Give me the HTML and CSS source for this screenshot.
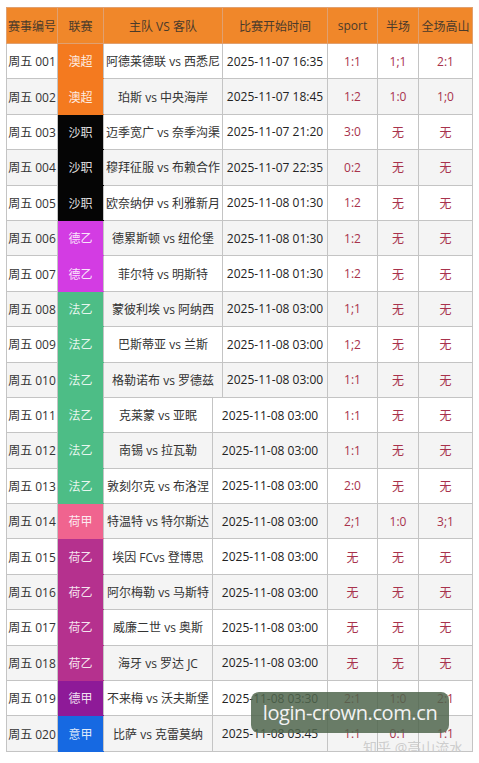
FILE: index.html
```html
<!DOCTYPE html>
<html lang="zh-CN">

<head>
    <meta charset="UTF-8">
    <meta name="viewport" content="width=device-width, initial-scale=1.0">
    <title>赛事列表</title>
    <link rel="stylesheet" href="styles.css">
</head>

<body>
    <div class="sheet">
        <table class="grid top">
            <colgroup>
                <col class="c-no">
                <col class="c-lg">
                <col class="c-team">
                <col class="c-time">
                <col class="c-sc">
                <col class="c-half">
                <col class="c-full">
            </colgroup>
            <thead>
                <tr>
                    <th>赛事编号</th>
                    <th>联赛</th>
                    <th>主队 VS 客队</th>
                    <th>比赛开始时间</th>
                    <th>sport</th>
                    <th>半场</th>
                    <th>全场高山</th>
                </tr>
            </thead>
            <tbody>
                <tr>
                    <td>周五 001</td>
                    <td class="lg aus">澳超</td>
                    <td>阿德莱德联 vs 西悉尼</td>
                    <td class="time">2025-11-07 16:35</td>
                    <td class="sc">1:1</td>
                    <td class="sc">1;1</td>
                    <td class="sc">2:1</td>
                </tr>
                <tr>
                    <td>周五 002</td>
                    <td class="lg aus">澳超</td>
                    <td>珀斯 vs 中央海岸</td>
                    <td class="time">2025-11-07 18:45</td>
                    <td class="sc">1:2</td>
                    <td class="sc">1:0</td>
                    <td class="sc">1;0</td>
                </tr>
                <tr>
                    <td>周五 003</td>
                    <td class="lg sau">沙职</td>
                    <td>迈季宽广 vs 奈季沟渠</td>
                    <td class="time">2025-11-07 21:20</td>
                    <td class="sc">3:0</td>
                    <td class="sc">无</td>
                    <td class="sc">无</td>
                </tr>
                <tr>
                    <td>周五 004</td>
                    <td class="lg sau">沙职</td>
                    <td>穆拜征服 vs 布赖合作</td>
                    <td class="time">2025-11-07 22:35</td>
                    <td class="sc">0:2</td>
                    <td class="sc">无</td>
                    <td class="sc">无</td>
                </tr>
                <tr>
                    <td>周五 005</td>
                    <td class="lg sau">沙职</td>
                    <td>欧奈纳伊 vs 利雅新月</td>
                    <td class="time">2025-11-08 01:30</td>
                    <td class="sc">1:2</td>
                    <td class="sc">无</td>
                    <td class="sc">无</td>
                </tr>
                <tr>
                    <td>周五 006</td>
                    <td class="lg ger2">德乙</td>
                    <td>德累斯顿 vs 纽伦堡</td>
                    <td class="time">2025-11-08 01:30</td>
                    <td class="sc">1:2</td>
                    <td class="sc">无</td>
                    <td class="sc">无</td>
                </tr>
                <tr>
                    <td>周五 007</td>
                    <td class="lg ger2">德乙</td>
                    <td>菲尔特 vs 明斯特</td>
                    <td class="time">2025-11-08 01:30</td>
                    <td class="sc">1:2</td>
                    <td class="sc">无</td>
                    <td class="sc">无</td>
                </tr>
                <tr>
                    <td>周五 008</td>
                    <td class="lg fra2">法乙</td>
                    <td>蒙彼利埃 vs 阿纳西</td>
                    <td class="time">2025-11-08 03:00</td>
                    <td class="sc">1;1</td>
                    <td class="sc">无</td>
                    <td class="sc">无</td>
                </tr>
                <tr>
                    <td>周五 009</td>
                    <td class="lg fra2">法乙</td>
                    <td>巴斯蒂亚 vs 兰斯</td>
                    <td class="time">2025-11-08 03:00</td>
                    <td class="sc">1;2</td>
                    <td class="sc">无</td>
                    <td class="sc">无</td>
                </tr>
                <tr>
                    <td>周五 010</td>
                    <td class="lg fra2">法乙</td>
                    <td>格勒诺布 vs 罗德兹</td>
                    <td class="time">2025-11-08 03:00</td>
                    <td class="sc">1:1</td>
                    <td class="sc">无</td>
                    <td class="sc">无</td>
                </tr>
            </tbody>
        </table>

        <table class="grid bottom">
            <colgroup>
                <col class="c-no">
                <col class="c-lg">
                <col class="c-team2">
                <col class="c-time2">
                <col class="c-sc">
                <col class="c-half">
                <col class="c-full">
            </colgroup>
            <tbody>
                <tr>
                    <td>周五 011</td>
                    <td class="lg fra2">法乙</td>
                    <td>克莱蒙 vs 亚眠</td>
                    <td class="time">2025-11-08 03:00</td>
                    <td class="sc">1:1</td>
                    <td class="sc">无</td>
                    <td class="sc">无</td>
                </tr>
                <tr>
                    <td>周五 012</td>
                    <td class="lg fra2">法乙</td>
                    <td>南锡 vs 拉瓦勒</td>
                    <td class="time">2025-11-08 03:00</td>
                    <td class="sc">1:1</td>
                    <td class="sc">无</td>
                    <td class="sc">无</td>
                </tr>
                <tr>
                    <td>周五 013</td>
                    <td class="lg fra2">法乙</td>
                    <td>敦刻尔克 vs 布洛涅</td>
                    <td class="time">2025-11-08 03:00</td>
                    <td class="sc">2:0</td>
                    <td class="sc">无</td>
                    <td class="sc">无</td>
                </tr>
                <tr>
                    <td>周五 014</td>
                    <td class="lg ned1">荷甲</td>
                    <td>特温特 vs 特尔斯达</td>
                    <td class="time">2025-11-08 03:00</td>
                    <td class="sc">2;1</td>
                    <td class="sc">1:0</td>
                    <td class="sc">3;1</td>
                </tr>
                <tr>
                    <td>周五 015</td>
                    <td class="lg ned2">荷乙</td>
                    <td>埃因 FCvs 登博思</td>
                    <td class="time">2025-11-08 03:00</td>
                    <td class="sc">无</td>
                    <td class="sc">无</td>
                    <td class="sc">无</td>
                </tr>
                <tr>
                    <td>周五 016</td>
                    <td class="lg ned2">荷乙</td>
                    <td>阿尔梅勒 vs 马斯特</td>
                    <td class="time">2025-11-08 03:00</td>
                    <td class="sc">无</td>
                    <td class="sc">无</td>
                    <td class="sc">无</td>
                </tr>
                <tr>
                    <td>周五 017</td>
                    <td class="lg ned2">荷乙</td>
                    <td>威廉二世 vs 奥斯</td>
                    <td class="time">2025-11-08 03:00</td>
                    <td class="sc">无</td>
                    <td class="sc">无</td>
                    <td class="sc">无</td>
                </tr>
                <tr>
                    <td>周五 018</td>
                    <td class="lg ned2">荷乙</td>
                    <td>海牙 vs 罗达 JC</td>
                    <td class="time">2025-11-08 03:00</td>
                    <td class="sc">无</td>
                    <td class="sc">无</td>
                    <td class="sc">无</td>
                </tr>
                <tr>
                    <td>周五 019</td>
                    <td class="lg ger1">德甲</td>
                    <td>不来梅 vs 沃夫斯堡</td>
                    <td class="time">2025-11-08 03:30</td>
                    <td class="sc">2:1</td>
                    <td class="sc">1:0</td>
                    <td class="sc">2:1</td>
                </tr>
                <tr>
                    <td>周五 020</td>
                    <td class="lg ita1">意甲</td>
                    <td>比萨 vs 克雷莫纳</td>
                    <td class="time">2025-11-08 03:45</td>
                    <td class="sc">1:1</td>
                    <td class="sc">0:1</td>
                    <td class="sc">1:1</td>
                </tr>
            </tbody>
        </table>

        <div class="stamp">login-crown.com.cn</div>
        <div class="credit">知乎 @高山流水</div>
    </div>
</body>

</html>
```

FILE: styles.css
```css
html, body {
    margin: 0;
    padding: 0;
    background: #fff;
}

body {
    font-family: "Open Sans", "Noto Sans CJK SC", sans-serif;
    color: #333;
}

.sheet {
    position: relative;
    width: 466px;
    padding: 7px 0 0 6px;
}

.grid {
    width: 466px;
    table-layout: fixed;
    border-collapse: collapse;
    font-size: 12px;
}

.bottom {
    margin-top: -1px;
}

th,
td {
    border: 1px solid #c4c4c4;
    padding: 0;
    text-align: center;
    white-space: nowrap;
    overflow: hidden;
}

th {
    height: 35px;
    background-color: #f0872a;
    color: #4a3a2a;
    font-weight: normal;
    font-size: 12px;
    border-color: #e0a070;
}

td {
    height: 34.4px;
}

tbody tr:nth-child(even) td {
    background-color: #f4f4f4;
}

.c-no { width: 51px; }
.c-lg { width: 46px; }
.c-team { width: 119px; }
.c-time { width: 105px; }
.c-team2 { width: 109px; }
.c-time2 { width: 115px; }
.c-sc { width: 50px; }
.c-half { width: 41px; }
.c-full { width: 54px; }

.time {
    color: #222;
}

.sc {
    color: #a8324c;
}

/* league colour blocks */
.grid tbody tr td.lg {
    color: rgba(255, 255, 255, 0.88);
}

.grid tbody tr td.aus { background-color: #f47a1f; border-top-color: #f47a1f; border-bottom-color: #f47a1f; }
.grid tbody tr td.sau { background-color: #050505; border-top-color: #050505; border-bottom-color: #050505; }
.grid tbody tr td.ger2 { background-color: #d33ce3; border-top-color: #d33ce3; border-bottom-color: #d33ce3; }
.grid tbody tr td.fra2 { background-color: #4dbd86; border-top-color: #4dbd86; border-bottom-color: #4dbd86; }
.grid tbody tr td.ned1 { background-color: #f0648f; border-top-color: #f0648f; border-bottom-color: #f0648f; }
.grid tbody tr td.ned2 { background-color: #b5318e; border-top-color: #b5318e; border-bottom-color: #b5318e; }
.grid tbody tr td.ger1 { background-color: #8e1a98; border-top-color: #8e1a98; border-bottom-color: #8e1a98; }
.grid tbody tr td.ita1 { background-color: #1669e2; border-top-color: #1669e2; border-bottom-color: #1669e2; }

/* overlays on top of the table */
.stamp {
    position: absolute;
    left: 251px;
    top: 692px;
    width: 198px;
    height: 41px;
    border-radius: 8px;
    background-color: rgba(80, 102, 78, 0.85);
    color: #f2f2f2;
    font-size: 20px;
    letter-spacing: -0.4px;
    line-height: 41px;
    text-align: center;
}

.credit {
    position: absolute;
    left: 363px;
    top: 737px;
    font-size: 14px;
    color: rgba(200, 200, 200, 0.9);
}
```
